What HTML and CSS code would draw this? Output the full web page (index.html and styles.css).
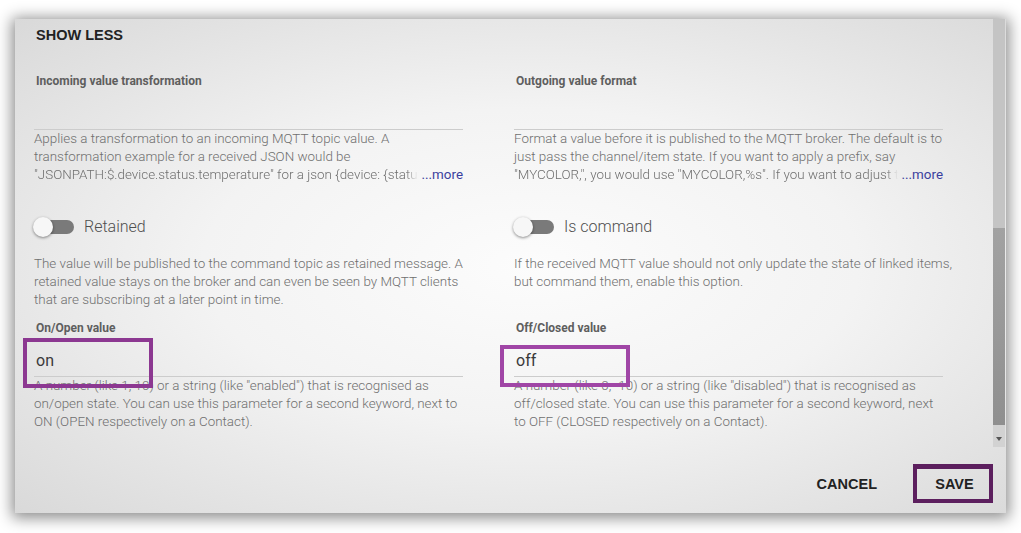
FILE: index.html
```html
<!DOCTYPE html>
<html lang="en">
<head>
<meta charset="utf-8">
<title>MQTT channel configuration</title>
<link rel="stylesheet" href="styles.css">
</head>
<body>
<div class="dialog">
  <div class="body">
    <div class="content">
      <div class="show-less">SHOW LESS</div>
      <div class="grid">
        <div class="field">
          <div class="label">Incoming value transformation</div>
          <div class="input"></div>
          <p class="desc">
            <span class="ln">Applies a transformation to an incoming MQTT topic value. A</span>
            <span class="ln">transformation example for a received JSON would be</span>
            <span class="ln ln-more"><span class="clip">"JSONPATH:$.device.status.temperature" for a json {device: {status: {temperature: 23.2 }}}.</span><span class="more">...more</span></span>
          </p>
        </div>
        <div class="field">
          <div class="label">Outgoing value format</div>
          <div class="input"></div>
          <p class="desc">
            <span class="ln">Format a value before it is published to the MQTT broker. The default is to</span>
            <span class="ln">just pass the channel/item state. If you want to apply a prefix, say</span>
            <span class="ln ln-more"><span class="clip">"MYCOLOR,", you would use "MYCOLOR,%s". If you want to adjust the precision of a number to for example 4 digits, you would use "%.4f".</span><span class="more">...more</span></span>
          </p>
        </div>

        <div class="field switch-field">
          <div class="switch-row">
            <span class="toggle"><span class="track"></span><span class="knob"></span></span>
            <span class="switch-label">Retained</span>
          </div>
          <p class="desc">
            <span class="ln">The value will be published to the command topic as retained message. A</span>
            <span class="ln">retained value stays on the broker and can even be seen by MQTT clients</span>
            <span class="ln">that are subscribing at a later point in time.</span>
          </p>
        </div>
        <div class="field switch-field">
          <div class="switch-row">
            <span class="toggle"><span class="track"></span><span class="knob"></span></span>
            <span class="switch-label">Is command</span>
          </div>
          <p class="desc">
            <span class="ln">If the received MQTT value should not only update the state of linked items,</span>
            <span class="ln">but command them, enable this option.</span>
          </p>
        </div>

        <div class="field third">
          <div class="label">On/Open value</div>
          <div class="input filled">on<span class="mark mark-on"></span></div>
          <p class="desc">
            <span class="ln">A number (like 1, 10) or a string (like "enabled") that is recognised as</span>
            <span class="ln">on/open state. You can use this parameter for a second keyword, next to</span>
            <span class="ln">ON (OPEN respectively on a Contact).</span>
          </p>
        </div>
        <div class="field third">
          <div class="label">Off/Closed value</div>
          <div class="input filled">off<span class="mark mark-off"></span></div>
          <p class="desc">
            <span class="ln">A number (like 0, -10) or a string (like "disabled") that is recognised as</span>
            <span class="ln">off/closed state. You can use this parameter for a second keyword, next</span>
            <span class="ln">to OFF (CLOSED respectively on a Contact).</span>
          </p>
        </div>
      </div>
    </div>
    <div class="scrollbar">
      <div class="sb-track"></div>
      <div class="sb-thumb"></div>
      <div class="sb-bottom"><span class="sb-arrow"></span></div>
    </div>
  </div>
  <div class="actions">
    <button class="btn">CANCEL</button>
    <button class="btn save">SAVE</button>
  </div>
</div>
</body>
</html>
```

FILE: styles.css
```css
html, body {
  margin: 0;
  padding: 0;
  background: #ffffff;
}

body {
  font-family: Roboto, "Liberation Sans", sans-serif;
  width: 1021px;
  height: 533px;
  overflow: hidden;
}

.dialog {
  margin: 19px 0 0 15px;
  width: 991px;
  height: 494px;
  display: flex;
  flex-direction: column;
  background: radial-gradient(ellipse farthest-corner at 52% 50%, #fcfcfc 0%, #f3f3f3 45%, #d9d9d9 100%);
  box-shadow: 0 2px 14px 3px rgba(0, 0, 0, 0.45);
}

.body {
  height: 428px;
  display: flex;
  overflow: hidden;
}

.content {
  flex: 1;
  padding: 8px 0 0 19px;
  overflow: hidden;
}

.show-less {
  font-family: "Liberation Sans", Arial, sans-serif;
  font-weight: 700;
  font-size: 14.5px;
  line-height: 17px;
  color: #222;
  padding-left: 2px;
}

.grid {
  margin-top: 30px;
  display: grid;
  grid-template-columns: 429px 429px;
  column-gap: 51px;
}

.label {
  font-size: 12px;
  font-weight: 700;
  line-height: 14px;
  color: #5e5e5e;
  padding-left: 2px;
}

.input {
  position: relative;
  height: 20px;
  padding: 16px 0 5px 2px;
  border-bottom: 1px solid #cccccc;
  font-size: 16px;
  line-height: 20px;
  color: #3a3a3a;
}

.desc {
  margin: 0;
  font-size: 13.4px;
  font-weight: 300;
  line-height: 18px;
  color: #6f6f6f;
}

.ln {
  display: block;
  white-space: nowrap;
}

.ln-more {
  display: flex;
}

.clip {
  flex: 1;
  min-width: 0;
  overflow: hidden;
  white-space: nowrap;
  -webkit-mask-image: linear-gradient(to left, transparent 0, transparent 2px, #000 14px);
  mask-image: linear-gradient(to left, transparent 0, transparent 2px, #000 14px);
}

.more {
  flex: none;
  padding-left: 2px;
  font-weight: 400;
  color: #3a3f9e;
}

.switch-field {
  padding-top: 33px;
}

.switch-row {
  display: flex;
  align-items: center;
  gap: 10px;
  height: 20px;
  margin-left: -1px;
  margin-bottom: 18px;
}

.toggle {
  position: relative;
  width: 41px;
  height: 20px;
  flex: none;
}

.track {
  position: absolute;
  left: 6px;
  top: 3px;
  width: 35px;
  height: 14px;
  border-radius: 7px;
  background: #7a7a7a;
}

.knob {
  position: absolute;
  left: 0;
  top: 0;
  width: 20px;
  height: 20px;
  border-radius: 50%;
  background: #f7f7f7;
  box-shadow: 0 1px 3px rgba(0, 0, 0, 0.45);
}

.switch-label {
  font-size: 16px;
  font-weight: 300;
  color: #4f4f4f;
  line-height: 20px;
}

.third {
  padding-top: 12px;
}

.mark {
  position: absolute;
  box-sizing: border-box;
  border: 4px solid #8c3891;
  pointer-events: none;
}

.mark-on {
  left: -11px;
  top: 3px;
  width: 130px;
  height: 50px;
}

.mark-off {
  left: -14px;
  top: 10px;
  width: 130px;
  height: 42px;
  border-color: #a046a6;
}

.scrollbar {
  width: 12px;
  margin-right: 1px;
  display: flex;
  flex-direction: column;
}

.sb-track {
  flex: 1;
  background: #c4c4c4;
}

.sb-thumb {
  height: 197px;
  background: linear-gradient(to bottom, #a2a2a2, #8f8f8f);
}

.sb-bottom {
  height: 22px;
  background: #d2d2d2;
  display: flex;
  justify-content: center;
  align-items: flex-start;
  padding-top: 12px;
  box-sizing: border-box;
}

.sb-arrow {
  width: 0;
  height: 0;
  border-left: 3px solid transparent;
  border-right: 3px solid transparent;
  border-top: 4px solid #555;
}

.actions {
  display: flex;
  justify-content: flex-end;
  align-items: flex-start;
  gap: 24px;
  padding: 17px 13px 0 0;
  box-sizing: border-box;
  height: 66px;
}

.btn {
  border: 0;
  background: transparent;
  font-family: "Liberation Sans", Arial, sans-serif;
  font-weight: 700;
  font-size: 14.5px;
  height: 36px;
  line-height: 36px;
  padding: 0 12px;
  margin: 2px 0 0 0;
  color: #222;
}

.save {
  box-sizing: border-box;
  width: 80px;
  height: 39px;
  line-height: 30px;
  margin-top: 0;
  padding: 0 0 0 3px;
  border-style: solid;
  border-color: #5c1f5e;
  border-width: 5px 4px 4px 4px;
}
```
